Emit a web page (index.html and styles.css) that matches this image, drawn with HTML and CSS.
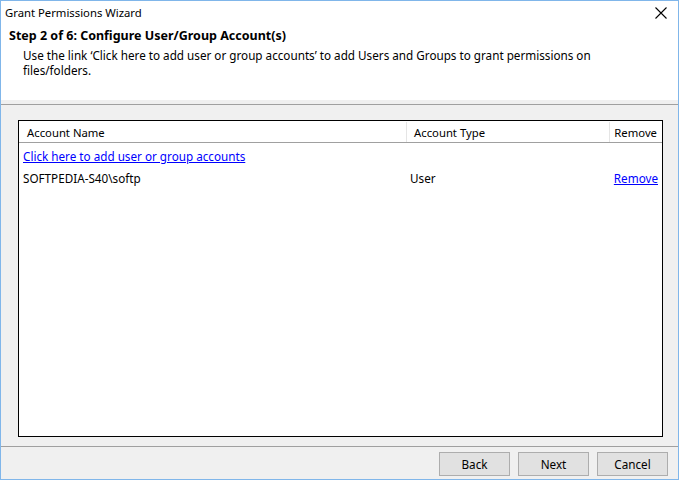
FILE: index.html
```html
<!DOCTYPE html>
<html lang="en">
<head>
  <meta charset="UTF-8">
  <title>Grant Permissions Wizard</title>
  <link rel="stylesheet" href="styles.css">
</head>
<body>
  <div class="window">
    <div class="top-area">
      <div class="titlebar">
        <span class="title">Grant Permissions Wizard</span>
        <svg class="close-icon" width="12" height="12" viewBox="0 0 12 12">
          <path d="M0.5 0.5 L11.5 11.5 M11.5 0.5 L0.5 11.5" stroke="#000" stroke-width="1.1" fill="none"/>
        </svg>
      </div>
      <h1 class="step-title">Step 2 of 6: Configure User/Group Account(s)</h1>
      <p class="step-desc">Use the link ‘Click here to add user or group accounts’ to add Users and Groups to grant permissions on files/folders.</p>
    </div>
    <div class="header-sep"></div>

    <div class="content">
      <div class="account-list">
        <div class="list-header">
          <div class="col col-name">Account Name</div>
          <div class="col col-type">Account Type</div>
          <div class="col col-remove">Remove</div>
        </div>
        <div class="list-body">
          <div class="list-row">
            <a class="link" href="#">Click here to add user or group accounts</a>
          </div>
          <div class="list-row">
            <div class="cell cell-name">SOFTPEDIA-S40\softp</div>
            <div class="cell cell-type">User</div>
            <div class="cell cell-remove"><a class="link" href="#">Remove</a></div>
          </div>
        </div>
      </div>
    </div>

    <div class="footer">
      <button class="btn">Back</button>
      <button class="btn">Next</button>
      <button class="btn">Cancel</button>
    </div>
  </div>
</body>
</html>
```

FILE: styles.css
```css
body {
  margin: 0;
  font-family: 'Noto Sans', 'Open Sans', sans-serif;
  font-size: 11.7px;
  color: #000;
  background: #fff;
}

.window {
  width: 679px;
  height: 480px;
  box-sizing: border-box;
  border: 1px solid #80b6ea;
  display: flex;
  flex-direction: column;
  background-color: #f0f0f0;
}

.top-area {
  background-color: #fff;
  height: 99px;
}

.titlebar {
  display: flex;
  justify-content: space-between;
  align-items: center;
  height: 24px;
  padding: 0 10px 0 4px;
}

.title {
  font-size: 11.3px;
  line-height: 16px;
}

.close-icon {
  margin-right: 1px;
}

.step-title {
  font-size: 12.5px;
  font-weight: bold;
  margin: 3px 0 0 8px;
  line-height: 16px;
}

.step-desc {
  margin: 4px 0 0 22px;
  line-height: 15px;
  width: 590px;
}

.header-sep {
  height: 4px;
  background-color: #f0f0f0;
  border-bottom: 1px solid #a0a0a0;
}

.content {
  flex: 1;
  padding: 15px 15px 9px 17px;
  display: flex;
  min-height: 0;
}

.account-list {
  flex: 1;
  min-width: 0;
  overflow: hidden;
  background-color: #fff;
  border: 1px solid #000;
}

.list-header {
  display: flex;
  height: 20px;
  padding-top: 1px;
  border-bottom: 1px solid #a0a0a0;
  line-height: 22px;
  font-size: 11.3px;
}

.col {
  box-sizing: border-box;
  padding: 0 8px;
  white-space: nowrap;
}

.col-name {
  width: 388px;
  border-right: 1px solid #e5e5e5;
}

.col-type {
  width: 203px;
  padding-left: 7px;
  border-right: 1px solid #e5e5e5;
}

.col-remove {
  flex: 1;
  text-align: right;
  padding: 0 5px 0 0;
}

.list-body {
  padding-top: 2px;
}

.list-row {
  display: flex;
  height: 22px;
  line-height: 22px;
  padding-left: 4px;
}

.cell {
  white-space: nowrap;
}

.cell-name {
  width: 387px;
}

.cell-type {
  width: 203px;
}

.cell-remove {
  flex: 1;
  text-align: right;
  padding-right: 4px;
}

.link {
  color: #0000ff;
  text-decoration: underline;
}

.footer {
  height: 27px;
  border-top: 1px solid #a0a0a0;
  display: flex;
  justify-content: flex-end;
  align-items: flex-start;
  gap: 8px;
  padding: 5px 10px 0 0;
}

.btn {
  width: 71px;
  height: 24px;
  background-color: #e1e1e1;
  border: 1px solid #adadad;
  font-family: inherit;
  font-size: 11.7px;
  color: #000;
  padding: 0;
}
```
